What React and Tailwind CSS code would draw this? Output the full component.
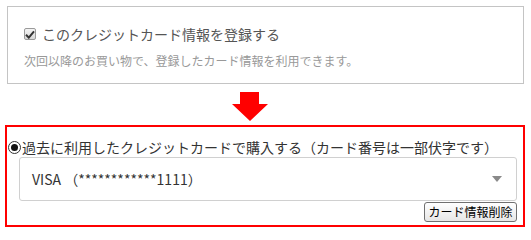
import { ChevronDown } from 'lucide-react'

// Saved card form: register checkbox, down arrow, then the saved-card choice
export default function App() {
    return (
        <div className="w-[531px] h-[232px] bg-white overflow-hidden font-['Noto_Sans_CJK_JP','Noto_Sans',sans-serif]">
            {/* register box */}
            <div className="pt-[6px] pl-[7px]">
                <div className="w-[517px] h-[78px] border border-[#c4c4c4] pt-[17px] pl-[16px]">
                    <label className="flex items-center h-[20px] gap-[6px]">
                        <span className="w-[12px] h-[12px] rounded-[2px] border border-[#9a9a9a] bg-gradient-to-b from-[#f4f4f4] to-[#d8d8d8] flex items-center justify-center">
                            <svg width="10" height="9" viewBox="0 0 10 9">
                                <path d="M1 4.8 L3.8 7.6 L9 1.4" fill="none" stroke="#333" strokeWidth="2" />
                            </svg>
                        </span>
                        <span className="text-[14px] leading-[20px] text-[#555]">このクレジットカード情報を登録する</span>
                    </label>
                    <p className="mt-[8px] text-[12px] leading-[18px] text-[#999]">
                        次回以降のお買い物で、登録したカード情報を利用できます。
                    </p>
                </div>
            </div>

            {/* arrow */}
            <div className="mt-[8px] ml-[232px] w-[36px] h-[29px]">
                <svg width="36" height="29" viewBox="0 0 36 29">
                    <polygon points="8,0 27,0 27,12 36,12 18,29 0,12 8,12" fill="#ff0000" />
                </svg>
            </div>

            {/* saved card box */}
            <div className="mt-[4px] ml-[5px] w-[520px] h-[102px] border-2 border-[#ff0000] pt-[10px]">
                <label className="flex items-center h-[20px] pl-[1px]">
                    <span className="w-[13px] h-[13px] rounded-full border border-[#333] bg-white flex items-center justify-center">
                        <span className="w-[7px] h-[7px] rounded-full bg-[#111]" />
                    </span>
                    <span className="ml-[1px] text-[14px] leading-[20px] text-[#333]">
                        過去に利用したクレジットカードで購入する（カード番号は一部伏字です）
                    </span>
                </label>
                <div className="pl-[12px] pr-[6px] flex flex-col">
                    <div className="h-[44px] border border-[#d0d0d0] rounded-[3px] flex items-center justify-between pl-[12px] pr-[14px]">
                        <span className="text-[14px] text-[#333]">VISA （************1111）</span>
                        <svg width="10" height="7" viewBox="0 0 10 7">
                            <polygon points="0,0 10,0 5,6" fill="#8a8a8a" />
                        </svg>
                    </div>
                    <button className="self-end mt-[1px] h-[20px] w-[93px] border border-[#707070] rounded-[3px] bg-gradient-to-b from-[#ffffff] to-[#e6e6e6] text-[12px] leading-[18px] text-black">
                        カード情報削除
                    </button>
                </div>
            </div>
        </div>
    )
}
